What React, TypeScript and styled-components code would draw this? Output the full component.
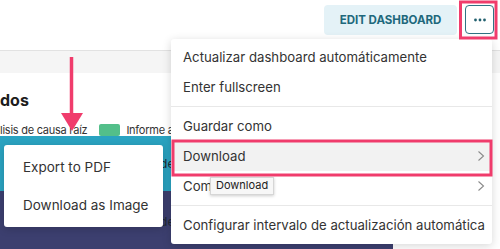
import styled, { createGlobalStyle } from "styled-components";

const GlobalStyle = createGlobalStyle`
  html, body {
    margin: 0;
    padding: 0;
    background: #ffffff;
    font-family: Inter, "Noto Sans", "Liberation Sans", sans-serif;
    overflow: hidden;
  }
`;

const menuItems = [
  { label: "Actualizar dashboard automáticamente" },
  { label: "Enter fullscreen" },
  { divider: true },
  { label: "Guardar como" },
  { label: "Download", sub: true, active: true },
  { label: "Compartir", sub: true },
  { divider: true },
  { label: "Configurar intervalo de actualización automática" },
];

function Chevron() {
  return (
    <svg width="8" height="12" viewBox="0 0 8 12">
      <path d="M1.5 1.5 L6.5 6 L1.5 10.5" fill="none" stroke="#8a8a8a" strokeWidth="1.1" />
    </svg>
  );
}

function App() {
  return (
    <Page>
      <GlobalStyle />
      <Header>
        <EditButton>EDIT DASHBOARD</EditButton>
        <MoreButton>
          <svg width="14" height="4" viewBox="0 0 14 4">
            <circle cx="2.5" cy="2" r="1.4" fill="#22606f" />
            <circle cx="7" cy="2" r="1.4" fill="#22606f" />
            <circle cx="11.5" cy="2" r="1.4" fill="#22606f" />
          </svg>
        </MoreButton>
      </Header>
      <FilterBand />
      <Content>
        <Title>dos</Title>
        <Legend>
          <LegendText>lisis de causa raíz</LegendText>
          <Swatch />
          <LegendText>Informe asociado</LegendText>
        </Legend>
        <Bar $color="#2aa3c1" $width={300} $height={55}>
          <BarLabel>Incidencia</BarLabel>
        </Bar>
        <Bar $color="#3c3f6f" $width={393} $height={60}>
          <BarLabel>Incidencia</BarLabel>
        </Bar>
      </Content>

      <Menu>
        {menuItems.map((item, i) =>
          item.divider ? (
            <Divider key={i} />
          ) : (
            <MenuItem key={i} $active={item.active}>
              <span>{item.label}</span>
              {item.sub && <Chevron />}
            </MenuItem>
          )
        )}
      </Menu>

      <SubMenu>
        <SubItem>Export to PDF</SubItem>
        <SubItem>Download as Image</SubItem>
      </SubMenu>

      <Tooltip>Download</Tooltip>

      <Annotations width="500" height="249" viewBox="0 0 500 249">
        <rect x="460.5" y="2" width="35.5" height="36" fill="none" stroke="#f03c6c" strokeWidth="3" />
        <rect x="173" y="141" width="318" height="34" fill="none" stroke="#f03c6c" strokeWidth="3" />
        <line x1="71.5" y1="57" x2="71.5" y2="116" stroke="#f03c6c" strokeWidth="3.5" />
        <polygon points="61,113 83,113 72,131" fill="#f03c6c" />
      </Annotations>
    </Page>
  );
}

export default App;

const Page = styled.div`
  position: relative;
  width: 500px;
  height: 249px;
  overflow: hidden;
  background: #ffffff;
`;

const Header = styled.header`
  box-sizing: border-box;
  height: 51px;
  display: flex;
  justify-content: flex-end;
  align-items: flex-start;
  gap: 8px;
  padding: 5px 6px 0 0;
  border-bottom: 1px solid #e2e2e2;
`;

const EditButton = styled.button`
  box-sizing: border-box;
  width: 133px;
  height: 30px;
  border: none;
  border-radius: 4px;
  background: #e4f2f7;
  color: #20687c;
  font-family: Inter, "Liberation Sans", sans-serif;
  font-size: 11.5px;
  font-weight: 700;
  padding: 0;
`;

const MoreButton = styled.button`
  box-sizing: border-box;
  width: 29px;
  height: 29px;
  border: 1.5px solid #2f7384;
  border-radius: 4px;
  background: #ffffff;
  display: flex;
  align-items: center;
  justify-content: center;
  padding: 0;
`;

const FilterBand = styled.div`
  height: 22px;
  background: #f5f5f5;
`;

const Content = styled.main`
  display: flex;
  flex-direction: column;
`;

const Title = styled.h2`
  margin: 17px 0 0;
  font-size: 16px;
  line-height: 20px;
  font-weight: 700;
  color: #1d1d1d;
`;

const Legend = styled.div`
  display: flex;
  align-items: flex-end;
  height: 12px;
  margin-top: 14px;
`;

const LegendText = styled.span`
  font-size: 11px;
  line-height: 14px;
  letter-spacing: -0.25px;
  color: #333333;
  white-space: nowrap;
  margin-bottom: -1px;
`;

const Swatch = styled.span`
  width: 21px;
  height: 12px;
  border-radius: 2px;
  background: #53bf8a;
  margin: 0 6px 0 12px;
`;

const Bar = styled.div<{ $color: string; $width: number; $height: number }>`
  width: ${(p) => p.$width}px;
  height: ${(p) => p.$height}px;
  background: ${(p) => p.$color};
  display: flex;
  align-items: center;
  padding-left: 140px;
  box-sizing: border-box;
`;

const BarLabel = styled.span`
  font-size: 12px;
  color: #1f2a33;
`;

const Menu = styled.div`
  position: absolute;
  left: 171px;
  top: 39px;
  width: 321px;
  box-sizing: border-box;
  padding: 3px 0 4px;
  background: #ffffff;
  border-radius: 3px;
  box-shadow: 0 2px 10px rgba(0, 0, 0, 0.16);
`;

const MenuItem = styled.div<{ $active?: boolean }>`
  height: 30px;
  display: flex;
  align-items: center;
  justify-content: space-between;
  padding: 0 7px 0 12px;
  font-size: 13.2px;
  color: #333333;
  background: ${(p) => (p.$active ? "#f2f2f2" : "transparent")};
  white-space: nowrap;
`;

const Divider = styled.div`
  height: 1px;
  margin: 4px 0;
  background: #e8e8e8;
`;

const SubMenu = styled.div`
  position: absolute;
  left: 4px;
  top: 145px;
  width: 159px;
  box-sizing: border-box;
  padding: 3px 0;
  background: #ffffff;
  border-radius: 3px;
  box-shadow: 0 2px 8px rgba(0, 0, 0, 0.18);
`;

const SubItem = styled.div`
  height: 38px;
  display: flex;
  align-items: center;
  padding-left: 19px;
  font-size: 13.5px;
  color: #333333;
  white-space: nowrap;
`;

const Tooltip = styled.div`
  position: absolute;
  left: 210px;
  top: 177px;
  padding: 1px 5px 2px;
  background: #f7f7f7;
  border: 1px solid #d6d6d6;
  box-shadow: 0 1px 3px rgba(0, 0, 0, 0.2);
  font-size: 11px;
  color: #222222;
  line-height: 13px;
`;

const Annotations = styled.svg`
  position: absolute;
  left: 0;
  top: 0;
  pointer-events: none;
`;
